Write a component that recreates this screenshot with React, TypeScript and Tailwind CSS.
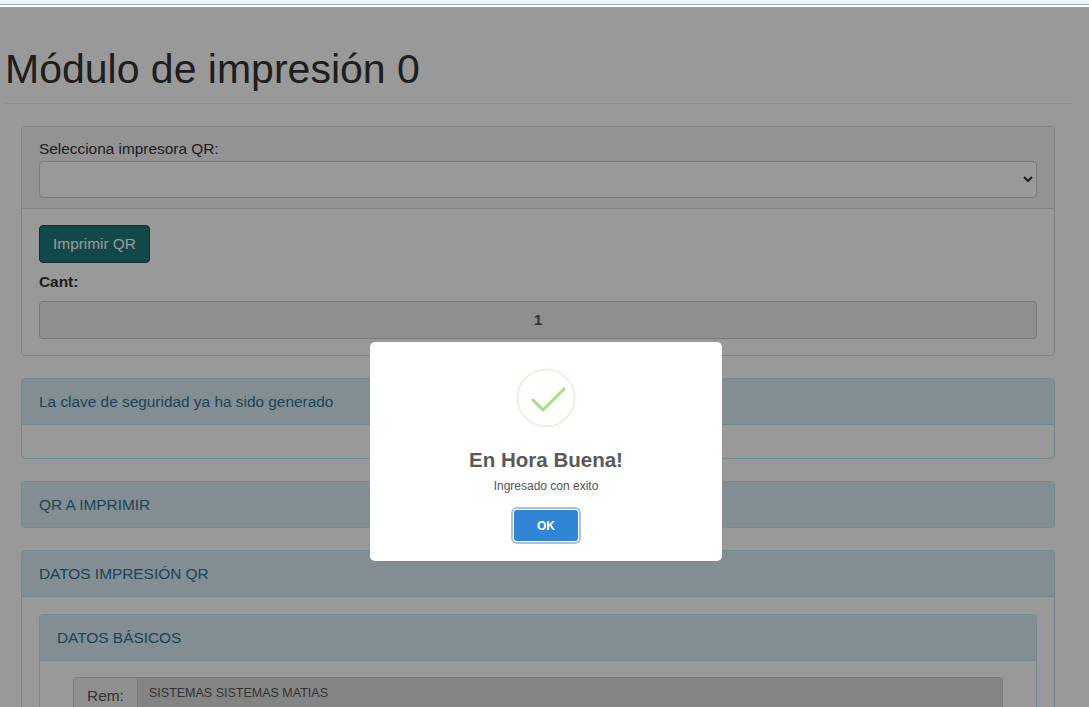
const FONT = "font-['Liberation_Sans',Arial,sans-serif]";

function InfoPanel({ title, children }: { title: string; children?: React.ReactNode }) {
  return (
    <div className="rounded border border-[#bce8f1] bg-white">
      <div className="flex h-[45px] items-center rounded-t-[3px] bg-[#d9edf7] px-[17px] text-[15.4px] text-[#31708f]">
        {title}
      </div>
      {children && <div className="border-t border-[#bce8f1]">{children}</div>}
    </div>
  );
}

function SuccessModal() {
  return (
    <div className="fixed inset-x-0 top-[7px] bottom-0 bg-black/40">
      <div className="mt-[335px] ml-[370px] flex h-[219px] w-[352px] flex-col items-center rounded-[5px] bg-white">
        <svg width="60" height="60" viewBox="0 0 60 60" className="mt-[26px]">
          <circle cx="30" cy="30" r="28.5" fill="none" stroke="#a5dc86" strokeOpacity="0.3" strokeWidth="2" />
          <path d="M17 32 L27 42 L48 21" fill="none" stroke="#a5dc86" strokeWidth="3" strokeLinecap="round" strokeLinejoin="round" />
        </svg>
        <h2 className="mt-[19px] text-[20.5px] leading-[26px] font-bold text-[#595959]">En Hora Buena!</h2>
        <p className="mt-[5px] text-[12px] leading-[16px] text-[#545454]">Ingresado con exito</p>
        <button
          type="button"
          className="mt-[16px] h-[31px] w-[64px] rounded-[3px] bg-[#3085d6] text-[12px] font-bold text-white shadow-[0_0_0_1px_#fff,0_0_0_3px_rgba(50,100,150,0.4)]"
        >
          OK
        </button>
      </div>
    </div>
  );
}

export default function App() {
  return (
    <div className={`${FONT} h-[707px] overflow-hidden bg-white text-[#333]`}>
      <div className="h-[4px] bg-[#eef1f7]" />
      <div className="h-[1px] bg-[#a9acb0]" />
      <div className="h-[2px] bg-white" />

      <div className="pr-[17px] pl-[4px]">
        <div className="border-b border-[#eee] pt-[35px] pb-[6px]">
          <h1 className="pl-[1px] text-[41px] leading-[55px] text-[#333]">Módulo de impresión 0</h1>
        </div>

        <div className="flex flex-col gap-[22px] pt-[22px] pr-[17px] pl-[17px]">
          <div className="rounded border border-[#ddd] bg-white">
            <div className="h-[82px] border-b border-[#ddd] bg-[#f5f5f5] px-[17px] pt-[13px]">
              <label className="block text-[15.4px] leading-[18px]">Selecciona impresora QR:</label>
              <select className="mt-[3px] h-[37px] w-full rounded border border-[#ccc] bg-white" />
            </div>
            <div className="px-[17px] pt-[16px] pb-[16px]">
              <button
                type="button"
                className="h-[38px] w-[111px] rounded border border-[#1a4f50] bg-[#20787a] text-[15.4px] text-white"
              >
                Imprimir QR
              </button>
              <label className="mt-[10px] block text-[15.4px] leading-[18px] font-bold">Cant:</label>
              <input
                readOnly
                value="1"
                className="mt-[10px] h-[38px] w-full rounded border border-[#ccc] bg-[#eee] text-center text-[15.4px] font-bold text-[#555]"
              />
            </div>
          </div>

          <InfoPanel title="La clave de seguridad ya ha sido generado">
            <div className="h-[33px]" />
          </InfoPanel>

          <InfoPanel title="QR A IMPRIMIR" />

          <InfoPanel title="DATOS IMPRESIÓN QR">
            <div className="p-[17px]">
              <InfoPanel title="DATOS BÁSICOS">
                <div className="px-[33px] py-[16px]">
                  <div className="flex h-[38px] rounded border border-[#ccc] bg-[#ddd]">
                    <span className="flex w-[64px] items-center justify-center border-r border-[#ccc] bg-[#eee] text-[15.4px] text-[#555]">
                      Rem:
                    </span>
                    <input
                      readOnly
                      value="SISTEMAS SISTEMAS MATIAS"
                      className="min-w-0 flex-1 bg-transparent px-[11px] pb-[6px] text-[12.5px] text-[#555]"
                    />
                  </div>
                </div>
              </InfoPanel>
            </div>
          </InfoPanel>
        </div>
      </div>

      <SuccessModal />
    </div>
  );
}
